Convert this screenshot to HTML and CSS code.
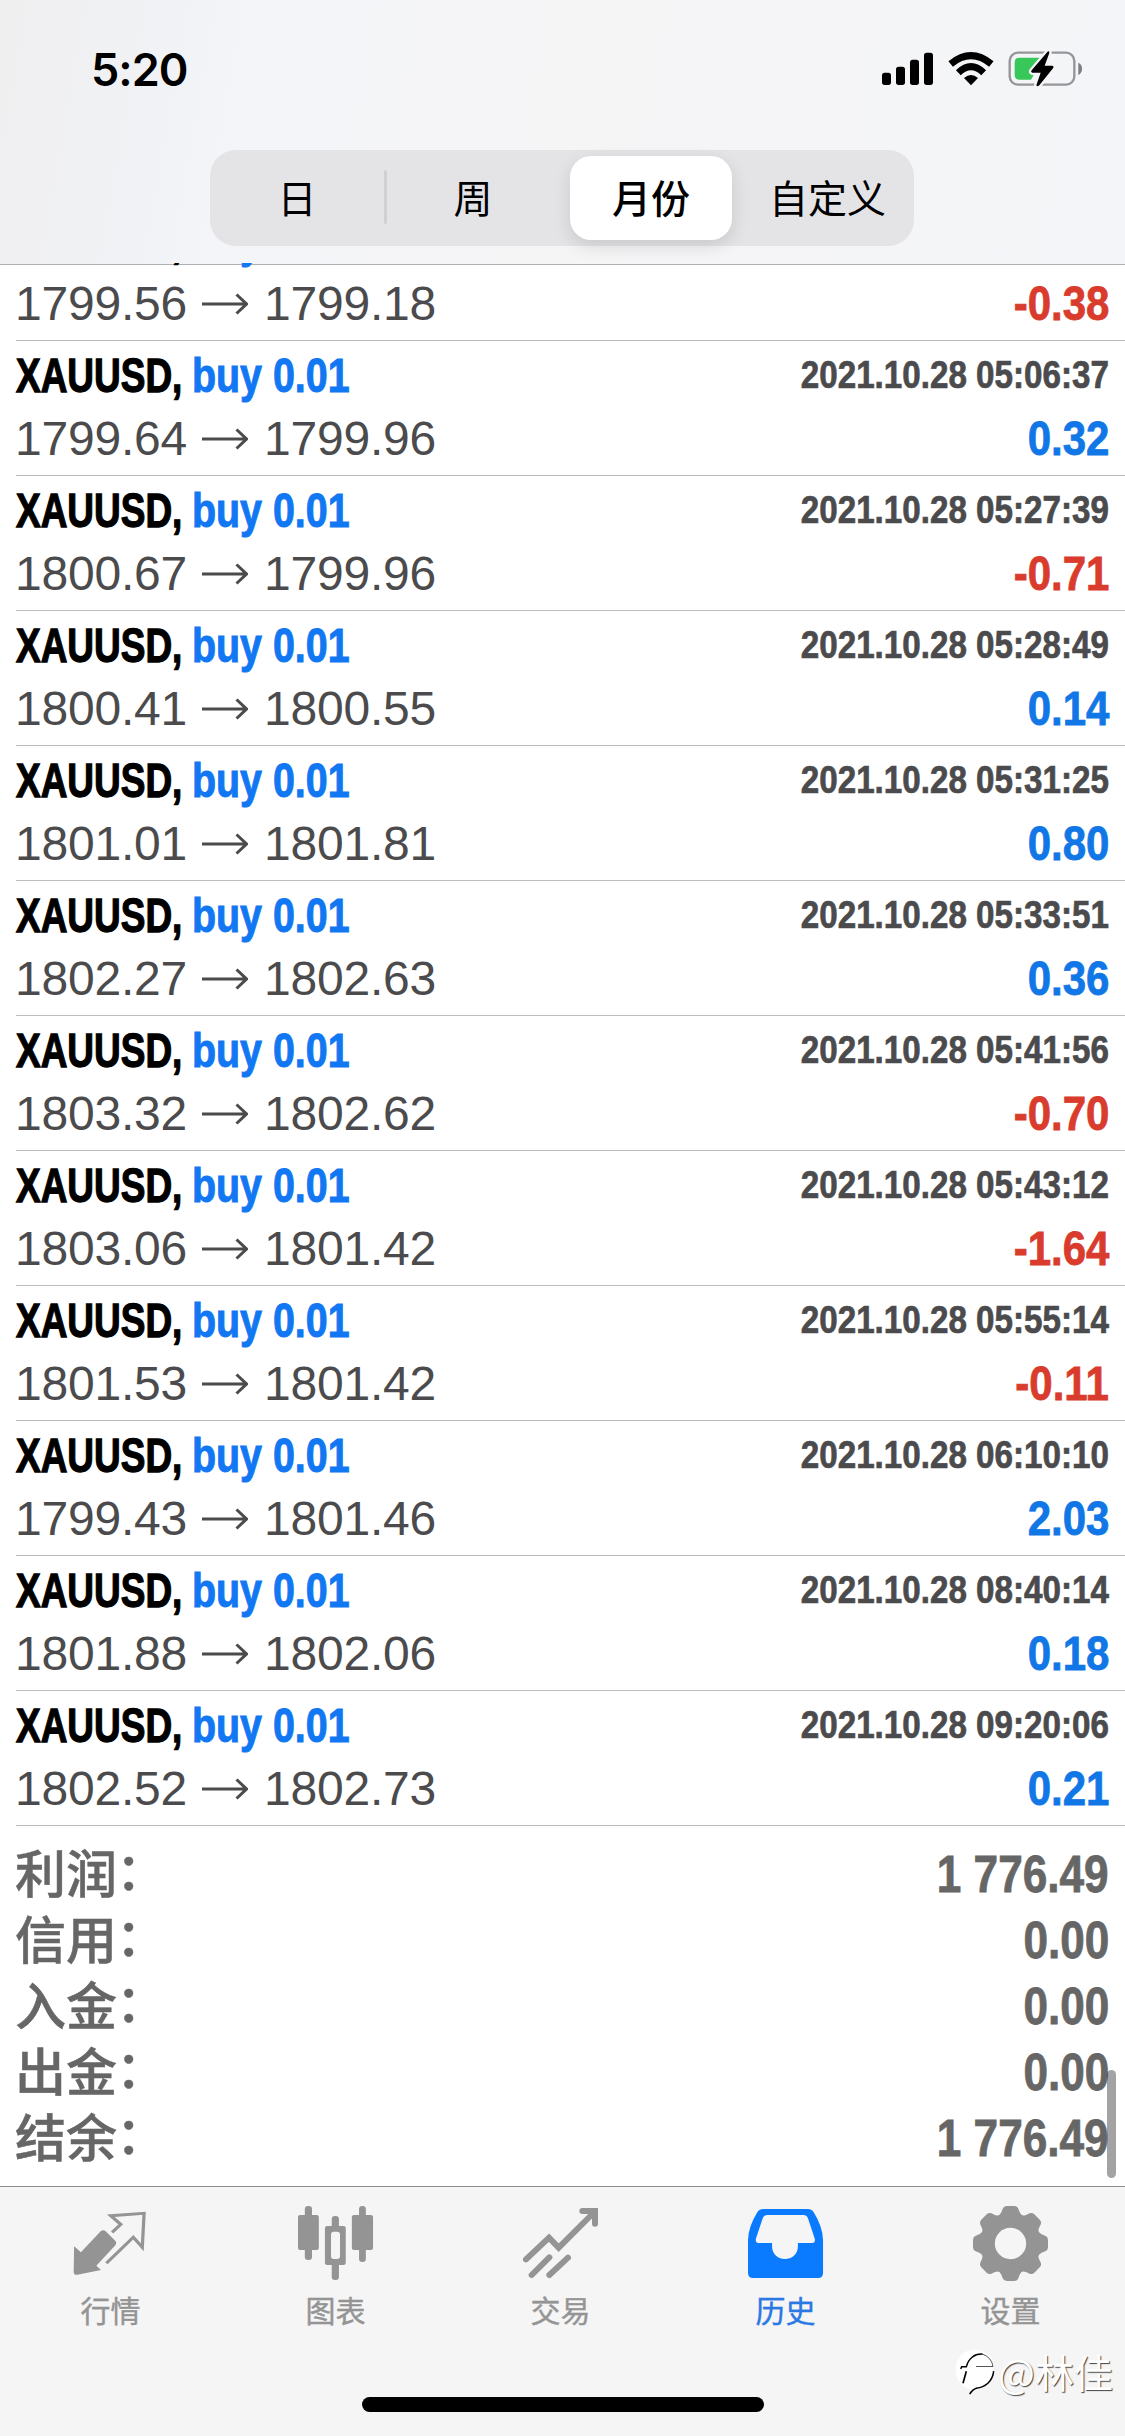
FILE: index.html
```html
<!DOCTYPE html>
<html lang="zh-CN">
<head>
<meta charset="utf-8">
<title>历史</title>
<link rel="stylesheet" href="styles.css">
</head>
<body>
<svg width="0" height="0" class="defs">
  <symbol id="arrow" viewBox="0 0 46 22">
    <path d="M0 11H44M34.500 1.500L44.500 11L34.500 20.500" fill="none" stroke="#4b4b4d" stroke-width="3"/>
  </symbol>
</svg>
<div class="screen">
  <header class="header">
    <div class="status">
      <span class="time">5:20</span>
      <svg class="status-icons" viewBox="0 0 660 180">
        <g fill="#000">
          <rect x="21" y="98" width="27" height="37" rx="8"/>
          <rect x="63" y="80" width="27" height="55" rx="8"/>
          <rect x="105" y="59" width="27" height="76" rx="8"/>
          <rect x="147" y="38" width="27" height="97" rx="8"/>
          <path d="M288 136L267 114Q288 96 309 114Z"/>
        </g>
        <g fill="none" stroke="#000" stroke-width="21">
          <path d="M250 98Q288 62 326 98"/>
          <path d="M227 72Q288 22 349 72"/>
        </g>
        <rect x="404" y="38" width="194" height="96" rx="25" fill="none" stroke="#95959a" stroke-width="7"/>
        <path d="M610 68Q621 73 621 86Q621 99 610 105Z" fill="#7d7d80"/>
        <path d="M434 53H505L468 119H434Q419 119 419 104V68Q419 53 434 53Z" fill="#38c759"/>
        <path d="M519 34L470 91Q466 97 472 98H497L484 136Q486 142 493 136L534 85Q538 78 531 77H509L523 39Q524 33 519 34Z" fill="#000" stroke="#f5f5f7" stroke-width="14" paint-order="stroke"/>
      </svg>
    </div>
    <nav class="segments">
      <span class="segment">日</span>
      <span class="segment divided">周</span>
      <span class="segment selected"><b>月份</b></span>
      <span class="segment">自定义</span>
    </nav>
  </header>

  <main class="content">
    <div class="deals">
      <div class="deal">
        <div class="top"><span class="symbol">XAUUSD,</span><span class="side">buy 0.01</span></div>
        <div class="bottom"><span class="from">1799.56</span><svg class="arrow"><use href="#arrow"/></svg><span>1799.18</span><span class="profit loss">-0.38</span></div>
      </div>
      <div class="deal">
        <div class="top"><span class="symbol">XAUUSD,</span><span class="side">buy 0.01</span><span class="date">2021.10.28 05:06:37</span></div>
        <div class="bottom"><span class="from">1799.64</span><svg class="arrow"><use href="#arrow"/></svg><span>1799.96</span><span class="profit">0.32</span></div>
      </div>
      <div class="deal">
        <div class="top"><span class="symbol">XAUUSD,</span><span class="side">buy 0.01</span><span class="date">2021.10.28 05:27:39</span></div>
        <div class="bottom"><span class="from">1800.67</span><svg class="arrow"><use href="#arrow"/></svg><span>1799.96</span><span class="profit loss">-0.71</span></div>
      </div>
      <div class="deal">
        <div class="top"><span class="symbol">XAUUSD,</span><span class="side">buy 0.01</span><span class="date">2021.10.28 05:28:49</span></div>
        <div class="bottom"><span class="from">1800.41</span><svg class="arrow"><use href="#arrow"/></svg><span>1800.55</span><span class="profit">0.14</span></div>
      </div>
      <div class="deal">
        <div class="top"><span class="symbol">XAUUSD,</span><span class="side">buy 0.01</span><span class="date">2021.10.28 05:31:25</span></div>
        <div class="bottom"><span class="from">1801.01</span><svg class="arrow"><use href="#arrow"/></svg><span>1801.81</span><span class="profit">0.80</span></div>
      </div>
      <div class="deal">
        <div class="top"><span class="symbol">XAUUSD,</span><span class="side">buy 0.01</span><span class="date">2021.10.28 05:33:51</span></div>
        <div class="bottom"><span class="from">1802.27</span><svg class="arrow"><use href="#arrow"/></svg><span>1802.63</span><span class="profit">0.36</span></div>
      </div>
      <div class="deal">
        <div class="top"><span class="symbol">XAUUSD,</span><span class="side">buy 0.01</span><span class="date">2021.10.28 05:41:56</span></div>
        <div class="bottom"><span class="from">1803.32</span><svg class="arrow"><use href="#arrow"/></svg><span>1802.62</span><span class="profit loss">-0.70</span></div>
      </div>
      <div class="deal">
        <div class="top"><span class="symbol">XAUUSD,</span><span class="side">buy 0.01</span><span class="date">2021.10.28 05:43:12</span></div>
        <div class="bottom"><span class="from">1803.06</span><svg class="arrow"><use href="#arrow"/></svg><span>1801.42</span><span class="profit loss">-1.64</span></div>
      </div>
      <div class="deal">
        <div class="top"><span class="symbol">XAUUSD,</span><span class="side">buy 0.01</span><span class="date">2021.10.28 05:55:14</span></div>
        <div class="bottom"><span class="from">1801.53</span><svg class="arrow"><use href="#arrow"/></svg><span>1801.42</span><span class="profit loss">-0.11</span></div>
      </div>
      <div class="deal">
        <div class="top"><span class="symbol">XAUUSD,</span><span class="side">buy 0.01</span><span class="date">2021.10.28 06:10:10</span></div>
        <div class="bottom"><span class="from">1799.43</span><svg class="arrow"><use href="#arrow"/></svg><span>1801.46</span><span class="profit">2.03</span></div>
      </div>
      <div class="deal">
        <div class="top"><span class="symbol">XAUUSD,</span><span class="side">buy 0.01</span><span class="date">2021.10.28 08:40:14</span></div>
        <div class="bottom"><span class="from">1801.88</span><svg class="arrow"><use href="#arrow"/></svg><span>1802.06</span><span class="profit">0.18</span></div>
      </div>
      <div class="deal">
        <div class="top"><span class="symbol">XAUUSD,</span><span class="side">buy 0.01</span><span class="date">2021.10.28 09:20:06</span></div>
        <div class="bottom"><span class="from">1802.52</span><svg class="arrow"><use href="#arrow"/></svg><span>1802.73</span><span class="profit">0.21</span></div>
      </div>
    </div>
    <div class="summary">
      <div class="total"><span class="label">利润<i>：</i></span><span class="value">1 776.49</span></div>
      <div class="total"><span class="label">信用<i>：</i></span><span class="value">0.00</span></div>
      <div class="total"><span class="label">入金<i>：</i></span><span class="value">0.00</span></div>
      <div class="total"><span class="label">出金<i>：</i></span><span class="value">0.00</span></div>
      <div class="total"><span class="label">结余<i>：</i></span><span class="value">1 776.49</span></div>
    </div>
    <div class="scrollbar"></div>
  </main>

  <footer class="footer">
    <nav class="tabs">
      <div class="tab">
        <svg class="icon" viewBox="207 108 208.9 225" preserveAspectRatio="none">
          <path d="M210 229L229 247L284 184Q291 177 298 184L326 214Q330 220 325 226L272 287L285 300L219 314Q209 316 209 305Z" fill="#949494"/>
          <path d="M316 187L340 163L312 137L405 130L400 232L375 202L300 280" fill="none" stroke="#949494" stroke-width="9"/>
        </svg>
        <span>行情</span>
      </div>
      <div class="tab">
        <svg class="icon" viewBox="833 108 208.9 225" preserveAspectRatio="none">
          <g fill="#949494">
            <rect x="852" y="108" width="20" height="162" rx="9"/>
            <rect x="833" y="135" width="58" height="105" rx="6"/>
            <rect x="1003" y="108" width="19" height="168" rx="9"/>
            <rect x="983" y="135" width="59" height="105" rx="6"/>
            <rect x="927" y="138" width="20" height="192" rx="9"/>
            <rect x="908" y="168" width="58" height="117" rx="6"/>
          </g>
          <rect x="925" y="185" width="25" height="82" rx="8" fill="#f5f5f5"/>
        </svg>
        <span>图表</span>
      </div>
      <div class="tab">
        <svg class="icon" viewBox="72 48 225 225">
          <g fill="none" stroke="#949494" stroke-width="18" stroke-linecap="round">
            <path d="M81 208L150 143L179 173L286 66"/>
            <path d="M250 63H288V101"/>
            <path d="M98 255L151 202" />
            <path d="M151 255L207 203"/>
          </g>
        </svg>
        <span>交易</span>
      </div>
      <div class="tab active">
        <svg class="icon" viewBox="521 108 208.9 225" preserveAspectRatio="none">
          <path fill-rule="evenodd" fill="#0a7aff" d="M563 117H688Q698 117 704 127Q729 170 730 210V309Q730 324 716 324H535Q521 324 521 309V210Q522 170 547 127Q553 117 563 117ZM575 135Q566 135 562 145L543 206Q541 219 550 219H588V229C588 280 660 280 660 229V219H700Q709 219 707 206L688 145Q684 135 676 135Z"/>
        </svg>
        <span>历史</span>
      </div>
      <div class="tab">
        <svg class="icon" viewBox="87 33 225 225">
          <g fill="#949494">
            <circle cx="199.500" cy="145.500" r="90"/>
            <path id="tooth" d="M157 65Q168 62 172 52L176 41Q179 33 188 33H211Q220 33 223 41L227 52Q231 62 242 65V100H157Z"/>
            <use href="#tooth" transform="rotate(45 199.500 145.500)"/>
            <use href="#tooth" transform="rotate(90 199.500 145.500)"/>
            <use href="#tooth" transform="rotate(135 199.500 145.500)"/>
            <use href="#tooth" transform="rotate(180 199.500 145.500)"/>
            <use href="#tooth" transform="rotate(225 199.500 145.500)"/>
            <use href="#tooth" transform="rotate(270 199.500 145.500)"/>
            <use href="#tooth" transform="rotate(315 199.500 145.500)"/>
          </g>
          <circle cx="199.500" cy="145.500" r="47" fill="#f5f5f5"/>
        </svg>
        <span>设置</span>
      </div>
    </nav>
    <div class="home-indicator"></div>
    <div class="watermark">
      <svg class="mark" viewBox="30 50 120 140">
        <path d="M88 55C55 55 32 80 32 113C32 145 50 165 75 174L74 188Q82 176 94 173C125 170 147 145 147 108C147 76 122 55 88 55Z" fill="#fff"/>
        <g fill="none" stroke="#000">
          <path d="M47 112L50 106H64C70 82 88 66 113 68" stroke-width="4.500"/>
          <path d="M64 119L54 155" stroke-width="5"/>
          <path d="M113 68Q140 78 144 105H93" stroke-width="2"/>
          <path d="M146 119C143 150 120 168 94 170Q82 174 74 188" stroke-width="4.500"/>
        </g>
      </svg>
      <span>@林佳</span>
    </div>
  </footer>
</div>
</body>
</html>
```
FILE: styles.css
```css
* {
  box-sizing: border-box;
}

body {
  margin: 0;
  background: #fff;
  font-family: "Liberation Sans", "Noto Sans CJK SC", sans-serif;
}

.defs {
  position: absolute;
}

.screen {
  display: flex;
  flex-direction: column;
  width: 1125px;
  height: 2436px;
  overflow: hidden;
}

/* Header */
.header {
  flex: none;
  height: 265px;
  border-bottom: 1px solid #b0b0b2;
  background: linear-gradient(100deg, #efeff0 0, #f1f2f5 15%, #f4f5f9 22%, #f5f5f6 50%, #f4f5f8 100%);
}

.status {
  display: flex;
  justify-content: space-between;
  height: 150px;
  padding: 40px 30px 0 91px;
}

.time {
  font: 600 45px/60px Inter, sans-serif;
  letter-spacing: -1px;
}

.status-icons {
  width: 220px;
  height: 60px;
}

.segments {
  display: grid;
  grid-template-columns: repeat(4, 1fr);
  width: 704px;
  height: 96px;
  margin-left: 210px;
  border-radius: 26px;
  background: #e4e4e7;
  font: 400 39px/92px "Noto Sans CJK SC", sans-serif;
}

.segment {
  display: flex;
  justify-content: center;
}

.segment:last-child {
  padding-left: 3px;
}

.segment:first-child {
  padding-right: 2px;
}

.divided::before {
  content: "";
  width: 3px;
  height: 54px;
  margin: 20px auto 0 -2px;
  border-radius: 2px;
  background: #d0d0d3;
}

.divided::after {
  content: "";
  width: 3px;
  margin-left: auto;
}

.selected b {
  width: 162px;
  height: 84px;
  margin: 6px 0 0 2px;
  border-radius: 21px;
  background: #fff;
  box-shadow: 0 6px 18px rgba(0, 0, 0, 0.12);
  font-weight: 500;
  line-height: 80px;
  text-align: center;
}

/* Deal history */
.content {
  position: relative;
  flex: none;
  height: 1923px;
  margin-top: -2px;
  overflow: hidden;
}

.deals {
  margin: -57px 0 0 16px;
}

.deal {
  height: 135px;
  padding-right: 16px;
  border-bottom: 1px solid #bcbcbf;
}

.top,
.bottom {
  display: flex;
  align-items: center;
  white-space: nowrap;
}

.top {
  height: 69px;
  font: bold 48px/69px "Liberation Sans", sans-serif;
}

.bottom {
  height: 57px;
  color: #4b4b4d;
  font-size: 48px;
  line-height: 57px;
  letter-spacing: -0.2px;
}

.symbol {
  width: 176px;
  transform: scaleX(0.77);
  transform-origin: left;
  -webkit-text-stroke: 1.3px;
}

.side {
  color: #1177f2;
  transform: scaleX(0.82);
  transform-origin: left;
  -webkit-text-stroke: 1px;
}

.date {
  margin-left: auto;
  color: #4b4b4d;
  font-size: 38px;
  transform: scaleX(0.873);
  transform-origin: right;
  -webkit-text-stroke: 0.7px;
}

.from {
  width: 173px;
  margin-left: -1px;
}

.arrow {
  width: 46px;
  height: 22px;
  margin: 0 16px 0 14px;
}

.profit {
  margin-left: auto;
  color: #1177e6;
  font-weight: bold;
  letter-spacing: 0;
  transform: scaleX(0.875);
  transform-origin: right;
  -webkit-text-stroke: 0.8px;
}

.loss {
  color: #d93c2d;
}

/* Totals */
.summary {
  padding: 15px 16px 0;
  color: #666;
}

.total {
  display: flex;
  justify-content: space-between;
  height: 66px;
  font-size: 51px;
  font-weight: bold;
  line-height: 67px;
}

.label {
  margin-left: -1px;
  font-family: "Noto Sans CJK SC", sans-serif;
  font-weight: 500;
  line-height: 60px;
  -webkit-text-stroke: 0.5px;
}

.label i {
  display: inline-block;
  font-style: normal;
  transform: translate(-1px, -3px);
}

.value {
  transform: scaleX(0.865);
  transform-origin: right;
  -webkit-text-stroke: 0.8px;
}

.scrollbar {
  position: absolute;
  top: 1807px;
  right: 9px;
  width: 9px;
  height: 108px;
  border-radius: 5px;
  background: rgba(0, 0, 0, 0.36);
}

/* Tab bar */
.footer {
  position: relative;
  flex: none;
  height: 250px;
  border-top: 1px solid #8d8d8f;
  background: #f5f5f5;
}

.tabs {
  display: grid;
  grid-template-columns: repeat(5, 225px);
  padding-top: 19px;
  margin-left: -2px;
}

.tab {
  display: flex;
  flex-direction: column;
  align-items: center;
  color: #949494;
  font: 400 30px/44px "Noto Sans CJK SC", sans-serif;
  -webkit-text-stroke: 0.4px;
}

.tab span {
  margin-top: 6px;
}

.active {
  color: #2a78e4;
}

.icon {
  width: 75px;
  height: 75px;
  overflow: visible;
}

.home-indicator {
  width: 402px;
  height: 15px;
  margin: 66px auto 0;
  border-radius: 8px;
  background: #000;
}

.watermark {
  position: absolute;
  top: 158px;
  left: 955px;
  display: flex;
  align-items: center;
  color: #fff;
  font: 400 39px/52px "Noto Sans CJK SC", sans-serif;
  text-shadow: 1px 1px 1px #444;
}

.mark {
  width: 40px;
  height: 47px;
  margin-right: 3px;
}
```
